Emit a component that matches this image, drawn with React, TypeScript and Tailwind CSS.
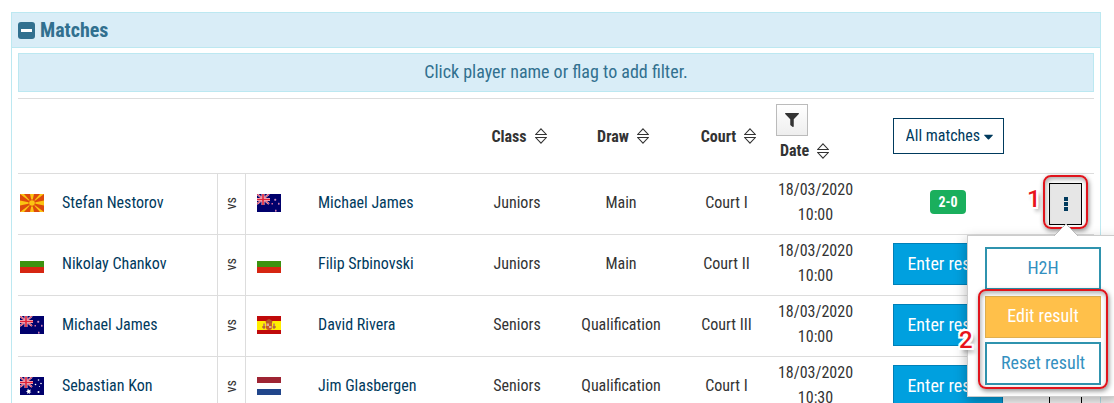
import React, { useState } from 'react';
import { FaFilter, FaCaretDown } from 'react-icons/fa';

type Country = 'mk' | 'nz' | 'bg' | 'es' | 'au' | 'nl';

interface Match {
  home: string;
  homeFlag: Country;
  away: string;
  awayFlag: Country;
  category: string;
  draw: string;
  court: string;
  time: string;
  score?: string;
}

const matches: Match[] = [
  { home: 'Stefan Nestorov', homeFlag: 'mk', away: 'Michael James', awayFlag: 'nz', category: 'Juniors', draw: 'Main', court: 'Court I', time: '10:00', score: '2-0' },
  { home: 'Nikolay Chankov', homeFlag: 'bg', away: 'Filip Srbinovski', awayFlag: 'bg', category: 'Juniors', draw: 'Main', court: 'Court II', time: '10:00' },
  { home: 'Michael James', homeFlag: 'nz', away: 'David Rivera', awayFlag: 'es', category: 'Seniors', draw: 'Qualification', court: 'Court III', time: '10:00' },
  { home: 'Sebastian Kon', homeFlag: 'au', away: 'Jim Glasbergen', awayFlag: 'nl', category: 'Seniors', draw: 'Qualification', court: 'Court I', time: '10:30' },
];

const UnionJack = () => (
  <g>
    <path d="M0 0 12 10M12 0 0 10" stroke="#f3b6c8" strokeWidth="2" />
    <path d="M0 0 12 10M12 0 0 10" stroke="#d8233f" strokeWidth="0.8" />
    <path d="M6 0V11M0 5.500H13" stroke="#f6c6d2" strokeWidth="3" />
    <path d="M6 0V11M0 5.500H13" stroke="#e02038" strokeWidth="1.6" />
  </g>
);

const Flag = ({ country }: { country: Country }) => (
  <svg width="24" height="18" viewBox="0 0 24 18" className="block" aria-hidden="true">
    {country === 'mk' && (
      <>
        <rect width="24" height="18" fill="#dd4a0c" />
        <path
          fill="#fbc312"
          d="M0 0H4L12 9ZM24 0H20L12 9ZM0 18H4L12 9ZM24 18H20L12 9ZM10 0H14L12 9ZM10 18H14L12 9ZM0 6.500V11.500L12 9ZM24 6.500V11.500L12 9Z"
        />
        <circle cx="12" cy="9" r="3.400" fill="#dd4a0c" />
        <circle cx="12" cy="9" r="2.800" fill="#fbc312" />
      </>
    )}
    {country === 'bg' && (
      <>
        <rect width="24" height="6" fill="#fff" />
        <rect y="6" width="24" height="6" fill="#3c9210" />
        <rect y="12" width="24" height="6" fill="#d62612" />
      </>
    )}
    {country === 'nl' && (
      <>
        <rect width="24" height="6" fill="#9e2433" />
        <rect y="6" width="24" height="6" fill="#fff" />
        <rect y="12" width="24" height="6" fill="#21468b" />
      </>
    )}
    {country === 'es' && (
      <>
        <rect width="24" height="18" fill="#c00a0a" />
        <rect y="5" width="24" height="9" fill="#ffee00" />
        <path d="M6 7.500H8V13H6ZM16 7.500H18V13H16Z" fill="#c98a58" />
        <path d="M8.500 5.500 10 4 12 3 14 4 15.500 5.500 15 7H9Z" fill="#b5572a" />
        <path d="M9 7H15V11.500Q15 14 12 14Q9 14 9 11.500Z" fill="#c9582a" />
        <path d="M9.500 7.500H12V10H9.500ZM12 10H14.500V12H12Z" fill="#dcae90" />
        <path d="M5 11H8.500M15.500 11H19" stroke="#a8402a" />
      </>
    )}
    {country === 'nz' && (
      <>
        <rect width="24" height="18" fill="#00006c" />
        <UnionJack />
        <g fill="#d56a9b">
          <path d="M17.500 5h1.500v1.500h-1.500zM14.500 9h1.500v1.500h-1.500zM21 9h1.500v1.500h-1.500zM18 16h1.500v1.500h-1.500z" />
          <path d="M18.200 4.500v2.500M17 5.800h2.500M21.800 8.500v2.500M18.800 15.200v2.600" stroke="#c9a3d8" strokeWidth="0.500" />
        </g>
      </>
    )}
    {country === 'au' && (
      <>
        <rect width="24" height="18" fill="#00006c" />
        <UnionJack />
        <g fill="#fff">
          <path d="m8.500 11.500.7 1.600 1.700-.5-.8 1.600 1.300 1.200-1.700.2-.1 1.700-1.100-1.300-1.400 1 .3-1.700-1.600-.7 1.600-.7-.3-1.700 1.300.9z" />
          <circle cx="18.500" cy="3" r="0.800" />
          <circle cx="15.500" cy="7.500" r="0.800" />
          <circle cx="21" cy="6.500" r="0.800" />
          <circle cx="18.500" cy="15" r="1" />
          <circle cx="19.500" cy="9.500" r="0.500" />
        </g>
      </>
    )}
  </svg>
);

const SortIcon = () => (
  <svg width="12" height="16" viewBox="0 0 12 16" fill="none" stroke="#333" strokeWidth="1.100" aria-hidden="true">
    <path d="M6 .8 11.300 6.500H.7ZM6 15.200 11.300 9.500H.7Z" />
  </svg>
);

const SortHeader = ({ label }: { label: string }) => (
  <button className="inline-flex items-center gap-2 font-bold">
    {label}
    <SortIcon />
  </button>
);

const Step = ({ n, className }: { n: number; className: string }) => (
  <span
    className={`absolute font-[Roboto,sans-serif] text-2xl leading-6 font-medium text-[#e8141c] [text-shadow:2px_0_#fff,-2px_0_#fff,0_2px_#fff,0_-2px_#fff,2px_2px_#fff,-2px_-2px_#fff,2px_-2px_#fff,-2px_2px_#fff,3px_4px_4px_#888] ${className}`}
  >
    {n}
  </span>
);

const highlight = 'pointer-events-none absolute rounded-lg border-2 border-[#e0141c] shadow-[1px_2px_5px_rgba(0,0,0,0.45),inset_1px_2px_5px_rgba(0,0,0,0.35)]';

const ActionMenu = () => (
  <div className="absolute top-[52px] -left-[82px] z-10 w-[152px] border border-[#ccc] bg-white px-[17px] py-[11px] text-lg shadow-[0_5px_12px_rgba(0,0,0,0.3)]">
    <svg width="24" height="12" viewBox="0 0 24 12" className="absolute -top-[12px] left-[86px]" aria-hidden="true">
      <path d="M0 12 12 0 24 12" fill="#fff" stroke="#bbb" />
    </svg>
    <button className="block h-[43px] w-full border-2 border-[#2f93ae] pb-0.5 text-[#3390c0]">H2H</button>
    <div className="relative mt-1.5 flex flex-col gap-1">
      <button className="h-[42px] border border-[#e0b050] bg-[#ffc04a] pb-0.5 text-white">Edit result</button>
      <button className="h-[43px] border-2 border-[#2f93ae] pb-0.5 text-[#3390c0]">Reset result</button>
      <div className={`${highlight} -inset-x-[7px] -top-[7px] -bottom-1`} />
      <Step n={2} className="top-8 -left-[26px]" />
    </div>
  </div>
);

const App: React.FC = () => {
  const [isExpanded, setIsExpanded] = useState(true);
  const [openRow, setOpenRow] = useState<number | null>(0);

  return (
    <div className="h-screen overflow-hidden bg-white pt-3 pr-[13px] pl-[11px] font-['Roboto_Condensed','Liberation_Sans_Narrow',Roboto,sans-serif] text-lg leading-[25px] text-[#333]">
      <section className="border border-[#bce8f1]">
        <h2 className="border-b border-[#bce8f1] bg-[#d9edf7] text-[#31708f]">
          <button
            className="flex h-[34px] w-full items-center gap-[5px] px-1.5 text-xl font-bold"
            onClick={() => setIsExpanded(!isExpanded)}
          >
            <svg width="17" height="17" viewBox="0 0 17 17" aria-hidden="true">
              <rect width="17" height="17" rx="3" fill="#31708f" />
              <path d="M3 8.500H14" stroke="#fff" strokeWidth="3" />
            </svg>
            Matches
          </button>
        </h2>

        {isExpanded && (
          <div className="p-1.5 pt-[5px]">
            <p className="mb-1.5 border border-[#bce8f1] bg-[#d9edf7] pt-[5px] pb-[7px] text-center text-[#31708f]">
              Click player name or flag to add filter.
            </p>

            <table className="w-full table-fixed border-collapse text-center text-base leading-[25px]">
              <colgroup>
                <col className="w-9" />
                <col className="w-[163px]" />
                <col className="w-7" />
                <col className="w-[65px]" />
                <col className="w-[159px]" />
                <col className="w-24" />
                <col className="w-28" />
                <col className="w-[99px]" />
                <col className="w-[79px]" />
                <col />
                <col className="w-[53px]" />
              </colgroup>
              <thead>
                <tr className="h-[75px] border-t border-[#ddd]">
                  <td colSpan={5} />
                  <th className="pl-1"><SortHeader label="Class" /></th>
                  <th className="pl-1"><SortHeader label="Draw" /></th>
                  <th className="pl-1"><SortHeader label="Court" /></th>
                  <th className="pb-1 text-left">
                    <button
                      aria-label="Filter by date"
                      className="flex h-8 w-8 items-center justify-center border border-[#bbb] bg-linear-to-b from-white to-[#eee]"
                    >
                      <FaFilter size={14} />
                    </button>
                    <span className="block h-7 px-1 pt-0.5"><SortHeader label="Date" /></span>
                  </th>
                  <th className="font-normal">
                    <div className="relative mx-auto w-[111px]">
                      <select
                        aria-label="Show matches"
                        className="h-9 w-full appearance-none border border-[#003a5d] bg-white px-3 text-base text-[#003a5d]"
                      >
                        <option>All matches</option>
                      </select>
                      <FaCaretDown size={15} className="pointer-events-none absolute top-[11px] right-2 text-[#003a5d]" />
                    </div>
                  </th>
                  <td />
                </tr>
              </thead>
              <tbody>
                {matches.map((match, i) => (
                  <tr key={match.home} className="h-[61px] border-t border-[#ddd]">
                    <td className="pb-0.5 pl-0.5">
                      <button className="block" aria-label={match.homeFlag}><Flag country={match.homeFlag} /></button>
                    </td>
                    <td className="px-2 pb-1 text-left text-[#003a5d]"><a href="#home">{match.home}</a></td>
                    <td className="border-x border-[#ddd] pb-1">
                      <span className="inline-block rotate-180 align-middle text-sm leading-5 [writing-mode:vertical-rl]">vs</span>
                    </td>
                    <td className="pb-0.5 pl-[11px]">
                      <button className="block" aria-label={match.awayFlag}><Flag country={match.awayFlag} /></button>
                    </td>
                    <td className="px-2 pb-1 text-left text-[#003a5d]"><a href="#away">{match.away}</a></td>
                    <td className="pb-1">{match.category}</td>
                    <td className="pb-1">{match.draw}</td>
                    <td className="pb-1">{match.court}</td>
                    <td className="pb-1">18/03/2020 {match.time}</td>
                    <td className="pb-0.5">
                      {match.score ? (
                        <span className="mb-1 inline-block rounded bg-[#1aaf5d] px-2 text-sm leading-6 font-bold text-white">{match.score}</span>
                      ) : (
                        <button className="h-[42px] w-[110px] border border-[#0080b8] bg-[#00a0df] text-lg text-white">Enter result</button>
                      )}
                    </td>
                    <td className="pl-2">
                      <div className="relative w-[33px]">
                        <button
                          aria-label="Match actions"
                          onClick={() => setOpenRow(openRow === i ? null : i)}
                          className={`flex h-[42px] w-full items-center justify-center border border-black ${openRow === i ? 'bg-[#e6e6e6]' : 'bg-white'}`}
                        >
                          <svg width="4" height="14" viewBox="0 0 4 14" fill="#003a5d" aria-hidden="true">
                            <path d="M0 0H4V4H0ZM0 5H4V9H0ZM0 10H4V14H0Z" />
                          </svg>
                        </button>
                        {openRow === i && (
                          <>
                            <ActionMenu />
                            <div className={`${highlight} -inset-x-1.5 -top-2 -bottom-1`} />
                            <Step n={1} className="top-1 -left-[22px]" />
                          </>
                        )}
                      </div>
                    </td>
                  </tr>
                ))}
              </tbody>
            </table>
          </div>
        )}
      </section>
    </div>
  );
};

export default App;
